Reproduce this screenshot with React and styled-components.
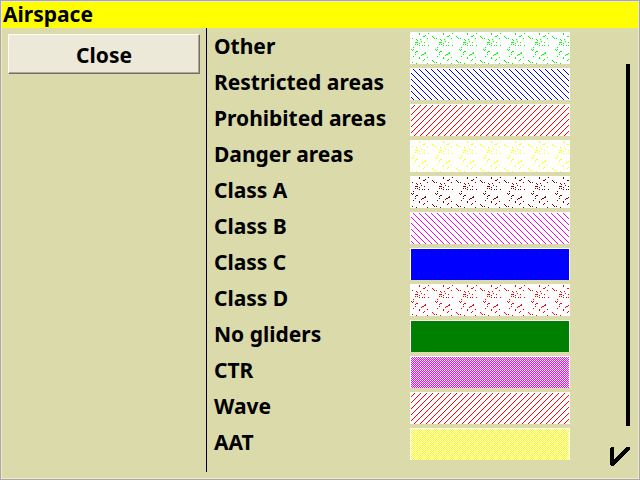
import React, { useId } from "react";
import styled, { createGlobalStyle } from "styled-components";

const GlobalStyle = createGlobalStyle`
  * { box-sizing: border-box; }
  body { margin: 0; background: #dadaab; }
`;

const Window = styled.main`
  display: flex;
  flex-direction: column;
  min-height: 100vh;
  border: 1px solid #aca899;
  box-shadow: inset 0 0 0 1px #ece9d8;
  padding: 1px;
  background: #dadaab;
  color: #000;
  font-family: "Noto Sans", "Open Sans", sans-serif;
  font-size: 21px;
  font-weight: 700;
  line-height: 26px;
`;

const TitleBar = styled.h1`
  margin: 0;
  padding: 0 1px;
  height: 26px;
  font-size: 21px;
  line-height: 24px;
  background: #ffff00;
`;

const Body = styled.div`
  display: flex;
  flex: 1;
  padding-bottom: 6px;
`;

const Sidebar = styled.nav`
  flex: 0 0 205px;
  padding: 6px;
  border-right: 1px solid #000;
`;

const CloseButton = styled.button`
  display: block;
  width: 192px;
  height: 40px;
  padding: 2px 0 0;
  border: 1px solid;
  border-color: #fff #716f64 #716f64 #fff;
  box-shadow: inset -1px -1px 0 #aca899;
  background: #ece9d8;
  color: #000;
  font: inherit;
`;

const List = styled.ul`
  flex: 1;
  list-style: none;
  margin: 0;
  padding: 2px 0 0 7px;
`;

const Row = styled.li`
  display: grid;
  grid-template-columns: 196px 1fr;
  align-items: center;
  height: 36px;
`;

const Label = styled.span`
  white-space: nowrap;
  padding-bottom: 4px;
`;

const Swatch = styled.svg`
  display: block;
  width: 100%;
  height: 32px;
  background: #fff;
  border: solid #fff;
  border-width: 1px 1px 0;
  shape-rendering: crispEdges;
`;

const Rail = styled.div`
  display: flex;
  flex-direction: column;
  align-items: flex-end;
  flex: 0 0 68px;
  padding: 36px 8px 0 0;
`;

const Scrollbar = styled.div`
  flex: 1;
  width: 4px;
  background: #000;
`;

const ConfirmButton = styled.button`
  width: 20px;
  height: 20px;
  margin: 21px 0 5px;
  padding: 0;
  border: 0;
  background: none;
  color: #000;

  svg { display: block; }
`;

const SPECKLES = [
  [9, 1], [9, 2], [18, 1], [15, 3], [13, 4], [14, 4], [22, 4], [23, 5], [0, 6],
  [2, 6], [17, 6], [6, 7], [10, 7], [7, 8], [11, 9], [5, 10], [7, 10], [14, 10],
  [6, 10], [9, 11], [5, 12], [7, 12], [18, 13], [12, 13], [9, 13], [14, 13],
  [3, 15], [1, 17], [3, 17], [2, 18], [6, 19], [7, 19], [5, 20], [15, 20],
  [15, 21], [14, 21], [12, 22], [13, 22], [5, 22], [11, 23], [3, 24], [9, 25],
  [9, 26], [17, 25], [14, 27], [13, 28], [22, 28], [23, 29], [0, 30], [2, 30],
  [6, 31], [17, 31],
];

function tile(w, h, isInked) {
  const dots = [];
  for (let y = 0; y < h; y += 1) {
    for (let x = 0; x < w; x += 1) {
      if (isInked(x, y)) dots.push([x, y]);
    }
  }
  return { w, h, dots };
}

const TILES = {
  speckle: { w: 24, h: 32, dots: SPECKLES },
  falling: tile(6, 6, (x, y) => (x - y + 6) % 6 === 2),
  rising: tile(6, 6, (x, y) => (x + y) % 6 === 5),
  checker: tile(32, 32, (x, y) => (x + y) % 2 === 1),
};

const AREAS = [
  { name: "Other", fill: "speckle", color: "#00ff00" },
  { name: "Restricted areas", fill: "falling", color: "#0000ff" },
  { name: "Prohibited areas", fill: "rising", color: "#ff0000" },
  { name: "Danger areas", fill: "speckle", color: "#ffff00" },
  { name: "Class A", fill: "speckle", color: "#800000" },
  { name: "Class B", fill: "falling", color: "#ff00ff" },
  { name: "Class C", fill: "solid", color: "#0000ff" },
  { name: "Class D", fill: "speckle", color: "#ff0000" },
  { name: "No gliders", fill: "solid", color: "#008000" },
  { name: "CTR", fill: "checker", color: "#ff00ff" },
  { name: "Wave", fill: "rising", color: "#ff0000" },
  { name: "AAT", fill: "checker", color: "#ffff00" },
];

function AreaSwatch({ fill, color }) {
  const id = useId();
  const pattern = TILES[fill];
  return (
    <Swatch aria-hidden="true">
      {pattern && (
        <pattern id={id} x="-1" y="-1" width={pattern.w} height={pattern.h} patternUnits="userSpaceOnUse">
          <path fill={color} d={pattern.dots.map(([x, y]) => `M${x} ${y}h1v1h-1z`).join("")} />
        </pattern>
      )}
      <rect width="100%" height="100%" fill={pattern ? `url(#${id})` : color} />
    </Swatch>
  );
}

export default function App() {
  return (
    <>
      <GlobalStyle />
      <Window>
        <TitleBar>Airspace</TitleBar>
        <Body>
          <Sidebar>
            <CloseButton type="button">Close</CloseButton>
          </Sidebar>
          <List>
            {AREAS.map((area) => (
              <Row key={area.name}>
                <Label>{area.name}</Label>
                <AreaSwatch fill={area.fill} color={area.color} />
              </Row>
            ))}
          </List>
          <Rail>
            <Scrollbar />
            <ConfirmButton type="button" aria-label="Confirm">
              <svg width="20" height="20" viewBox="0 0 20 20" shapeRendering="crispEdges">
                <path d="M0 1L1 0H3L4 1V12L16 0H19L20 1V2L4 18L3 19H1L0 18Z" fill="currentColor" />
              </svg>
            </ConfirmButton>
          </Rail>
        </Body>
      </Window>
    </>
  );
}
